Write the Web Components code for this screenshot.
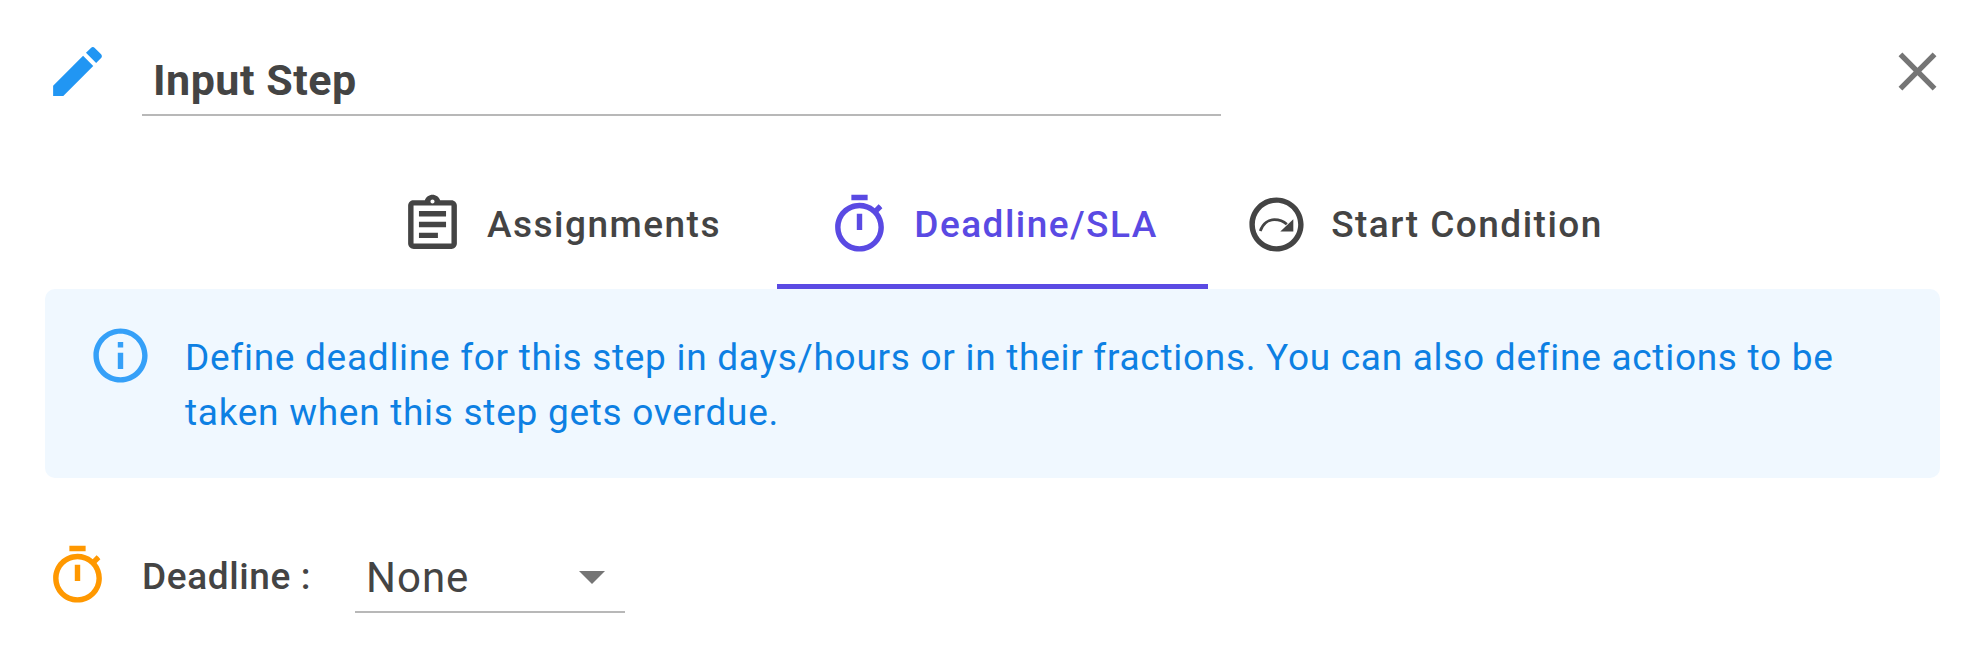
<!DOCTYPE html>
<html lang="en">
<head>
<meta charset="utf-8">
<title>Input Step</title>
<style>
    html, body { margin: 0; background: #fff; }
    body { font-family: Roboto, "Liberation Sans", sans-serif; color: #444; }
</style>
</head>
<body>
<step-dialog>
    <step-header title-text="Input Step"></step-header>
    <step-tabs>
        <step-tab icon="assignment" width="427" inset-right="6">Assignments</step-tab>
        <step-tab icon="timer" width="431" active>Deadline/SLA</step-tab>
        <step-tab icon="redo-circle" width="429" inset-left="2">Start Condition</step-tab>
    </step-tabs>
    <info-banner>Define deadline for this step in days/hours or in their fractions. You can also define actions to be taken when this step gets overdue.</info-banner>
    <deadline-row label="Deadline :" value="None"></deadline-row>
</step-dialog>
<script>
const ICONS = {
    edit: '<path d="M3 17.25V21h3.75L17.81 9.94l-3.75-3.75L3 17.25zM20.71 7.04c.39-.39.39-1.02 0-1.41l-2.34-2.34c-.39-.39-1.02-.39-1.41 0l-1.83 1.83 3.75 3.75 1.83-1.83z"/>',
    close: '<path d="M19 6.41L17.59 5 12 10.59 6.41 5 5 6.41 10.59 12 5 17.59 6.41 19 12 13.41 17.59 19 19 17.59 13.41 12z"/>',
    assignment: '<path d="M7 15h7v2H7zm0-4h10v2H7zm0-4h10v2H7zm12-4h-4.18C14.4 1.84 13.3 1 12 1c-1.3 0-2.4.84-2.82 2H5c-.14 0-.27.01-.4.04-.39.08-.74.28-1.01.55-.18.18-.33.4-.43.64-.1.23-.16.49-.16.77v14c0 .27.06.54.16.78s.25.45.43.64c.27.27.62.47 1.01.55.13.02.26.03.4.03h14c1.1 0 2-.9 2-2V5c0-1.1-.9-2-2-2zm-7-.25c.41 0 .75.34.75.75s-.34.75-.75.75-.75-.34-.75-.75.34-.75.75-.75zM19 19H5V5h14v14z"/>',
    timer: '<path d="M15 1H9v2h6V1zm-4 13h2V8h-2v6zm8.03-6.61l1.42-1.42c-.43-.51-.9-.99-1.41-1.41l-1.42 1.42C16.07 4.74 14.12 4 12 4c-4.97 0-9 4.03-9 9s4.02 9 9 9 9-4.03 9-9c0-2.12-.74-4.07-1.97-5.61zM12 20c-3.87 0-7-3.13-7-7s3.13-7 7-7 7 3.13 7 7-3.13 7-7 7z"/>',
    'redo-circle': '<path d="M12 2C6.48 2 2 6.48 2 12s4.48 10 10 10 10-4.48 10-10S17.52 2 12 2zm0 18c-4.42 0-8-3.58-8-8s3.58-8 8-8 8 3.58 8 8-3.58 8-8 8z"/><path d="M6 14.4C7 11.5 9.2 10.2 11.2 10.2c1.8 0 3.3.5 4.6 1.7" fill="none" stroke="currentColor" stroke-width="1"/><path d="M18.2 10.1v4.5h-4.8z"/>',
    info: '<path d="M11 7h2v2h-2zm0 4h2v6h-2zm1-9C6.48 2 2 6.48 2 12s4.48 10 10 10 10-4.48 10-10S17.52 2 12 2zm0 18c-4.41 0-8-3.59-8-8s3.59-8 8-8 8 3.59 8 8-3.59 8-8 8z"/>'
};

class AppIcon extends HTMLElement {
    connectedCallback() {
        const name = this.getAttribute('name');
        const root = this.shadowRoot || this.attachShadow({ mode: 'open' });
        root.innerHTML = `
            <style>
                :host {
                    display: block;
                    flex: none;
                    width: var(--icon-size, 65px);
                    height: var(--icon-size, 65px);
                    color: inherit;
                }
                svg { display: block; width: 100%; height: 100%; fill: currentColor; }
            </style>
            <svg viewBox="0 0 24 24" aria-hidden="true">${ICONS[name] || ''}</svg>
        `;
    }
}

class StepDialog extends HTMLElement {
    constructor() {
        super();
        this.attachShadow({ mode: 'open' });
        this.shadowRoot.innerHTML = `
            <style>
                :host {
                    display: block;
                    box-sizing: border-box;
                    width: 1986px;
                    height: 663px;
                    padding: 39px 46px 0 45px;
                    overflow: hidden;
                }
            </style>
            <slot></slot>
        `;
    }
}

class StepHeader extends HTMLElement {
    connectedCallback() {
        const title = this.getAttribute('title-text') || '';
        const root = this.shadowRoot || this.attachShadow({ mode: 'open' });
        root.innerHTML = `
            <style>
                :host { display: flex; align-items: flex-start; height: 78px; }
                .pencil { color: #2196f3; margin-right: 32px; }
                .field {
                    box-sizing: border-box;
                    width: 1079px;
                    height: 77px;
                    padding: 16px 0 0 11px;
                    border-bottom: 2px solid #b8b8b8;
                    font: 700 43px/50px Roboto, sans-serif;
                    letter-spacing: .5px;
                    color: #444;
                }
                .close { color: #757575; margin: 0 -10px 0 auto; }
            </style>
            <app-icon class="pencil" name="edit"></app-icon>
            <div class="field">${title}</div>
            <app-icon class="close" name="close"></app-icon>
        `;
    }
}

class StepTabs extends HTMLElement {
    constructor() {
        super();
        this.attachShadow({ mode: 'open' });
        this.shadowRoot.innerHTML = `
            <style>
                :host {
                    display: flex;
                    justify-content: center;
                    margin: 38px 0 0;
                    padding-left: 2px;
                    height: 134px;
                }
            </style>
            <slot></slot>
        `;
    }
}

class StepTab extends HTMLElement {
    connectedCallback() {
        const icon = this.getAttribute('icon');
        const width = this.getAttribute('width');
        const insetLeft = this.getAttribute('inset-left') || 0;
        const insetRight = this.getAttribute('inset-right') || 0;
        const root = this.shadowRoot || this.attachShadow({ mode: 'open' });
        root.innerHTML = `
            <style>
                :host {
                    display: flex;
                    box-sizing: border-box;
                    width: ${width}px;
                    height: 134px;
                    padding: 10px ${insetRight}px 0 ${insetLeft}px;
                    align-items: center;
                    justify-content: center;
                    gap: 22px;
                    color: #444;
                    font: 500 37px/44px Roboto, sans-serif;
                    letter-spacing: 1.48px;
                    border-bottom: 5px solid transparent;
                }
                :host([active]) { color: #5a4ae3; border-bottom-color: #5a4ae3; }
            </style>
            <app-icon name="${icon}"></app-icon>
            <span><slot></slot></span>
        `;
    }
}

class InfoBanner extends HTMLElement {
    constructor() {
        super();
        this.attachShadow({ mode: 'open' });
        this.shadowRoot.innerHTML = `
            <style>
                :host {
                    display: flex;
                    box-sizing: border-box;
                    height: 189px;
                    padding: 34px 43px 0 43px;
                    gap: 32px;
                    background: #f0f8ff;
                    border-radius: 10px;
                    color: #0d80e3;
                    font: 400 37px/55px Roboto, sans-serif;
                    letter-spacing: .72px;
                }
                app-icon { color: #35a0f8; }
                .text { padding-top: 7px; }
            </style>
            <app-icon name="info"></app-icon>
            <div class="text"><slot></slot></div>
        `;
    }
}

class DeadlineRow extends HTMLElement {
    connectedCallback() {
        const label = this.getAttribute('label') || '';
        const value = this.getAttribute('value') || '';
        const root = this.shadowRoot || this.attachShadow({ mode: 'open' });
        root.innerHTML = `
            <style>
                :host { display: flex; align-items: flex-start; margin-top: 65px; color: #444; }
                .timer { color: #ff9800; margin-right: 32px; }
                .label {
                    width: 213px;
                    font: 500 37px/44px Roboto, sans-serif;
                    letter-spacing: .6px;
                    padding-top: 12px;
                }
                .select {
                    box-sizing: border-box;
                    display: flex;
                    align-items: center;
                    width: 270px;
                    height: 70px;
                    padding: 1px 20px 0 11px;
                    border-bottom: 2px solid #b8b8b8;
                    font: 400 42px/48px Roboto, sans-serif;
                    letter-spacing: 1px;
                }
                .arrow {
                    margin-left: auto;
                    width: 0;
                    height: 0;
                    border-left: 13px solid transparent;
                    border-right: 13px solid transparent;
                    border-top: 13px solid #757575;
                }
            </style>
            <app-icon class="timer" name="timer"></app-icon>
            <div class="label">${label}</div>
            <div class="select"><span>${value}</span><span class="arrow"></span></div>
        `;
    }
}

customElements.define('app-icon', AppIcon);
customElements.define('step-dialog', StepDialog);
customElements.define('step-header', StepHeader);
customElements.define('step-tabs', StepTabs);
customElements.define('step-tab', StepTab);
customElements.define('info-banner', InfoBanner);
customElements.define('deadline-row', DeadlineRow);
</script>
</body>
</html>
